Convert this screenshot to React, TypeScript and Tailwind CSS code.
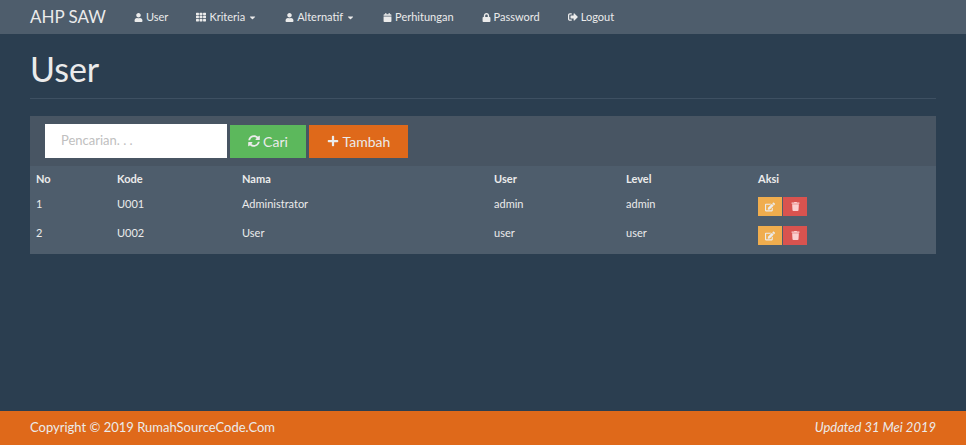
import React from "react";
import { FaUser, FaTh, FaCalendar, FaLock, FaSignOutAlt, FaSyncAlt, FaPlus, FaEdit, FaTrash, FaCaretDown } from "react-icons/fa";

const rows = [
  ["1", "U001", "Administrator", "admin", "admin"],
  ["2", "U002", "User", "user", "user"],
];

export default function App() {
  const cols = "grid grid-cols-[81px_125px_252px_132px_132px_1fr] px-[6px]";
  return (
    <div className="w-[966px] h-[445px] bg-[#2b3e50] text-[#ebebeb] flex flex-col" style={{ fontFamily: "Lato, 'Liberation Sans', sans-serif" }}>
      <div className="h-[34px] bg-[#4e5d6c] flex items-center pl-[30px] text-[11px] shrink-0">
        <span className="text-[17px] mr-[28px]">AHP SAW</span>
        <span className="flex items-center gap-[3px] mr-[28px]"><FaUser size={9} />User</span>
        <span className="flex items-center gap-[3px] mr-[28px]"><FaTh size={10} />Kriteria<FaCaretDown size={9} /></span>
        <span className="flex items-center gap-[3px] mr-[28px]"><FaUser size={9} />Alternatif<FaCaretDown size={9} /></span>
        <span className="flex items-center gap-[3px] mr-[28px]"><FaCalendar size={9} />Perhitungan</span>
        <span className="flex items-center gap-[3px] mr-[28px]"><FaLock size={9} />Password</span>
        <span className="flex items-center gap-[3px]"><FaSignOutAlt size={10} />Logout</span>
      </div>
      <div className="flex-1 px-[30px]">
        <div className="text-[34px] leading-none pt-[18px] pb-[12px] border-b border-[#3e5062]">User</div>
        <div className="mt-[17px] bg-[#4e5d6c]">
          <div className="bg-[#485563] h-[50px] flex items-center pl-[15px] gap-[3px]">
            <div className="w-[182px] h-[34px] bg-white text-[#c0c0c0] text-[13px] flex items-center pl-[16px]">Pencarian. . .</div>
            <div className="h-[33px] w-[76px] bg-[#5cb85c] flex items-center justify-center gap-[3px] text-[14px]"><FaSyncAlt size={12} />Cari</div>
            <div className="h-[33px] w-[99px] bg-[#df691a] flex items-center justify-center gap-[4px] text-[14px]"><FaPlus size={12} />Tambah</div>
          </div>
          <div className="text-[11px] pb-[4px]">
            <div className={`${cols} font-bold h-[26px] items-center`}>
              <span>No</span><span>Kode</span><span>Nama</span><span>User</span><span>Level</span><span>Aksi</span>
            </div>
            {rows.map((r) => (
              <div key={r[0]} className={`${cols} h-[29px] items-center`}>
                {r.map((c, i) => <span key={i} className="-mt-[4px]">{c}</span>)}
                <span className="flex gap-[1px]">
                  <span className="w-[24px] h-[19px] bg-[#f0ad4e] flex items-center justify-center"><FaEdit size={10} /></span>
                  <span className="w-[24px] h-[19px] bg-[#d9534f] flex items-center justify-center"><FaTrash size={9} className="text-[#fbd0d0]" /></span>
                </span>
              </div>
            ))}
          </div>
        </div>
      </div>
      <div className="h-[34px] bg-[#df691a] flex items-center justify-between px-[30px] text-[13px] shrink-0">
        <span>Copyright © 2019 RumahSourceCode.Com</span>
        <span className="italic">Updated 31 Mei 2019</span>
      </div>
    </div>
  );
}
